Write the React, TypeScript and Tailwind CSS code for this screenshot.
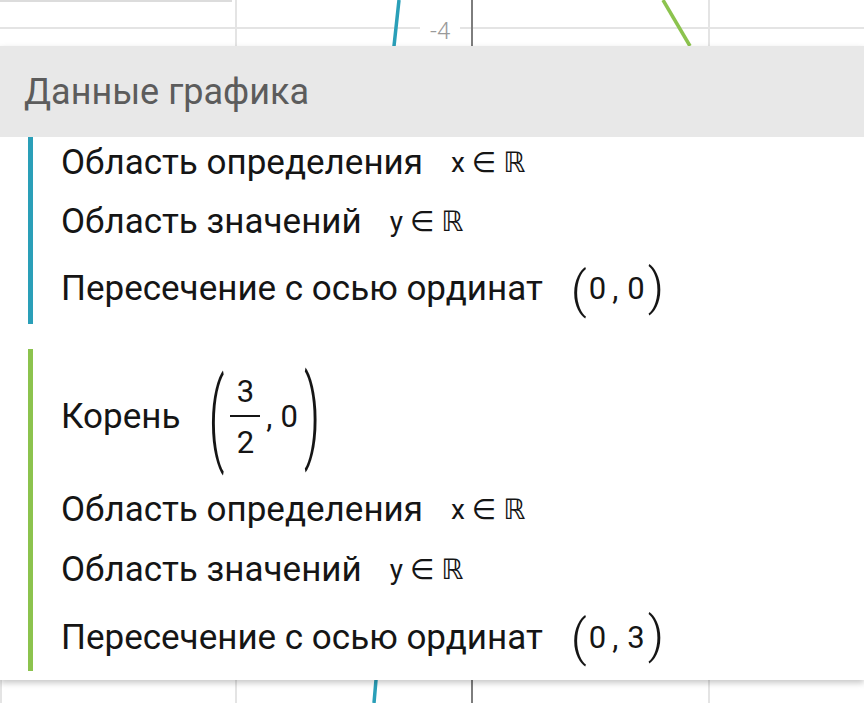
import React from "react";

type RowProps = {
  label: string;
  className: string;
  children: React.ReactNode;
};

type GroupProps = {
  color: string;
  children: React.ReactNode;
};

const GraphBackdrop = () => {
  return (
    <svg
      className="absolute inset-0"
      width={864}
      height={703}
      viewBox="0 0 864 703"
    >
      <line x1={0} y1={1} x2={232} y2={1} stroke="#dcdcdc" strokeWidth={2} />
      <line x1={0} y1={28} x2={420} y2={28} stroke="#e4e4e4" strokeWidth={2} />
      <line x1={460} y1={28} x2={864} y2={28} stroke="#e4e4e4" strokeWidth={2} />
      <line x1={236} y1={0} x2={236} y2={703} stroke="#e4e4e4" strokeWidth={2} />
      <line x1={709} y1={0} x2={709} y2={703} stroke="#e4e4e4" strokeWidth={2} />
      <line x1={1} y1={680} x2={1} y2={703} stroke="#e4e4e4" strokeWidth={2} />
      <line x1={472} y1={0} x2={472} y2={703} stroke="#7d7d7d" strokeWidth={2} />
      <text
        x={430}
        y={39}
        fontSize={24}
        fill="#9a9a9a"
        fontFamily="Roboto, sans-serif"
        fontWeight={300}
      >
        -4
      </text>
      <polyline
        points="399,0 394,46 376,680 374,703"
        fill="none"
        stroke="#2a9fb8"
        strokeWidth={3.5}
      />
      <line x1={663} y1={0} x2={690} y2={46} stroke="#8cc34e" strokeWidth={3.5} />
    </svg>
  );
};

const Paren = ({ side, tall }: { side: "(" | ")"; tall?: boolean }) => {
  return (
    <span
      className={
        tall
          ? "inline-block text-[50px] font-light leading-none scale-y-[2.05]"
          : "inline-block text-[50px] font-light leading-none"
      }
    >
      {side}
    </span>
  );
};

const Row = ({ label, className, children }: RowProps) => {
  return (
    <div className={`flex items-center ${className}`}>
      <span className="text-[35px] text-[#151515]">{label}</span>
      <span className="ml-[28px] flex items-center text-[#151515]">
        {children}
      </span>
    </div>
  );
};

const Member = ({ v }: { v: string }) => {
  return (
    <span className="text-[28px] leading-none">
      {v} <span className="font-['DejaVu_Sans']">∈</span>{" "}
      <span className="font-['DejaVu_Sans']">ℝ</span>
    </span>
  );
};

const Point = ({ a, b }: { a: string; b: string }) => {
  return (
    <span className="flex items-center text-[31px]">
      <Paren side="(" />
      <span className="ml-[2px]">{a}</span>
      <span className="ml-[6px] mr-[9px]">,</span>
      <span>{b}</span>
      <span className="ml-[3px]">
        <Paren side=")" />
      </span>
    </span>
  );
};

const Group = ({ color, children }: GroupProps) => {
  return (
    <div
      className="ml-[28px] border-l-[5px] pl-[28px]"
      style={{ borderColor: color }}
    >
      {children}
    </div>
  );
};

export default function App() {
  return (
    <div className="relative h-[703px] w-[864px] overflow-hidden bg-white font-['Roboto',sans-serif]">
      <GraphBackdrop />
      <div className="relative mt-[46px] bg-white pb-[9px] shadow-[0_3px_6px_rgba(0,0,0,0.22)]">
        <div className="flex h-[91px] items-center bg-[#e8e8e8] pl-6 text-[36px] text-[#5c5c5c]">
          Данные графика
        </div>

        <Group color="#2a9fb8">
          <Row label="Область определения" className="h-[52px]">
            <Member v="x" />
          </Row>
          <Row label="Область значений" className="h-[66px]">
            <Member v="y" />
          </Row>
          <Row label="Пересечение с осью ординат" className="h-[69px]">
            <Point a="0" b="0" />
          </Row>
        </Group>

        <div className="h-[25px]" />

        <Group color="#8cc34e">
          <Row label="Корень" className="h-[136px]">
            <span className="flex items-center text-[31px]">
              <Paren side="(" tall />
              <span className="ml-[6px] flex flex-col items-center leading-none">
                <span className="pb-[8px]">3</span>
                <span className="h-[2px] w-[30px] bg-[#151515]" />
                <span className="pt-[10px]">2</span>
              </span>
              <span className="ml-[6px] mr-[8px]">,</span>
              <span>0</span>
              <span className="ml-[6px]">
                <Paren side=")" tall />
              </span>
            </span>
          </Row>
          <Row label="Область определения" className="h-[50px]">
            <Member v="x" />
          </Row>
          <Row label="Область значений" className="h-[70px]">
            <Member v="y" />
          </Row>
          <Row label="Пересечение с осью ординат" className="h-[66px]">
            <Point a="0" b="3" />
          </Row>
        </Group>
      </div>
    </div>
  );
}
